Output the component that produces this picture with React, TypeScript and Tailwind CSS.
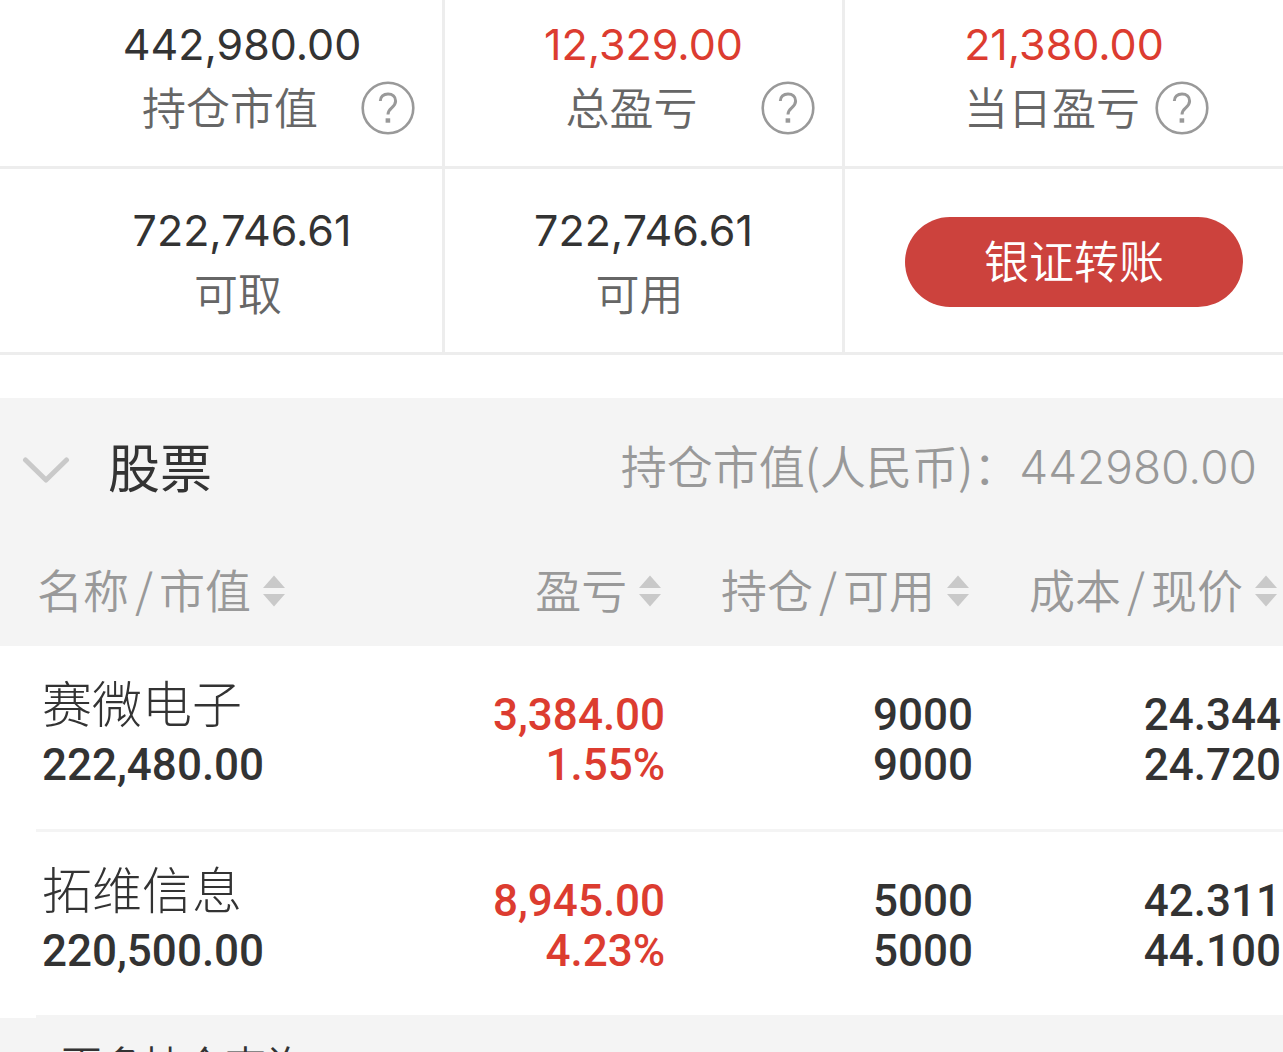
import type { ReactNode } from "react";

type Stat = {
  value: string;
  label: string;
  rise?: boolean;
  helpClass?: string;
};

const stats: Stat[] = [
  { value: "442,980.00", label: "持仓市值", helpClass: "pr-[27px]" },
  { value: "12,329.00", label: "总盈亏", rise: true, helpClass: "pr-[27px]" },
  { value: "21,380.00", label: "当日盈亏", rise: true, helpClass: "pr-[74px]" },
];

const funds: Stat[] = [
  { value: "722,746.61", label: "可取" },
  { value: "722,746.61", label: "可用" },
];

const holdings = [
  {
    name: "赛微电子",
    marketValue: "222,480.00",
    profit: "3,384.00",
    ratio: "1.55%",
    shares: "9000",
    available: "9000",
    cost: "24.344",
    price: "24.720",
  },
  {
    name: "拓维信息",
    marketValue: "220,500.00",
    profit: "8,945.00",
    ratio: "4.23%",
    shares: "5000",
    available: "5000",
    cost: "42.311",
    price: "44.100",
  },
];

const columns = [
  { parts: ["名称", "市值"], className: "w-[28%] pl-[37px]", align: "justify-start" },
  { parts: ["盈亏"], className: "w-[24%] pr-[6px]", align: "justify-end" },
  { parts: ["持仓", "可用"], className: "w-[24%] pr-[6px]", align: "justify-end" },
  { parts: ["成本", "现价"], className: "w-[24%] pr-[6px]", align: "justify-end" },
];

function HelpIcon() {
  return (
    <svg viewBox="0 0 54 54" className="block size-[54px]" fill="none" stroke="#999" aria-hidden="true">
      <circle cx="27" cy="27" r="25.3" strokeWidth="2.6" />
      <path
        d="M19.3 20c0-4.2 3.2-7 7.7-7s7.6 2.9 7.6 7c0 3.2-1.6 4.9-3.9 6.9C28.2 29 27 30.3 27 33.5"
        strokeWidth="3"
      />
      <rect x="24.6" y="37.3" width="4.6" height="4.4" fill="#999" stroke="none" />
    </svg>
  );
}

function SortIcon() {
  return (
    <svg viewBox="0 0 22 32" className="h-8 w-[22px] shrink-0" fill="#c9c9c9" aria-hidden="true">
      <path d="M11 0.5 22 13H0zM0 19h22L11 31.5z" />
    </svg>
  );
}

function StatCell({ value, label, rise, helpClass }: Stat) {
  return (
    <div>
      <div
        className={`text-center font-['Inter',sans-serif] text-[43px] leading-[58px] font-normal ${
          rise ? "text-[#dc3c30]" : "text-[#333]"
        }`}
      >
        {value}
      </div>
      <div className="mt-0.5 grid h-[66px] grid-cols-[minmax(0,1fr)_auto_minmax(0,1fr)] items-center">
        <span />
        <span className={`self-start text-[44px] leading-[62px] text-[#666] ${helpClass ? "pr-6" : "pr-2"}`}>
          {label}
        </span>
        {helpClass && (
          <div className={`flex justify-end ${helpClass}`}>
            <button type="button" aria-label={`${label}说明`} className="shrink-0">
              <HelpIcon />
            </button>
          </div>
        )}
      </div>
    </div>
  );
}

function NumberCell({ children, rise }: { children: ReactNode; rise?: boolean }) {
  return (
    <td
      className={`border-b-[3px] border-[#f4f4f4] pt-11 pr-0.5 text-right align-top font-['Roboto',sans-serif] text-[44px] leading-[50px] font-medium ${
        rise ? "text-[#dc3c30]" : "text-[#333]"
      }`}
    >
      {children}
    </td>
  );
}

export default function App() {
  return (
    <main className="h-screen overflow-hidden bg-white font-['Noto_Sans_CJK_SC',sans-serif] font-[350] text-[#333]">
      <section className="grid grid-cols-[445fr_400fr_438fr]">
        {stats.map((item, i) => (
          <div
            key={item.label}
            className={`h-[169px] border-b-[3px] border-[#ededed] pt-[15px] ${i < 2 ? "border-r-[3px]" : ""} ${
              i === 0 ? "pl-[42px]" : ""
            }`}
          >
            <StatCell {...item} />
          </div>
        ))}
        {funds.map((item, i) => (
          <div
            key={item.label}
            className={`h-[186px] border-r-[3px] border-b-[3px] border-[#ededed] pt-8 ${i === 0 ? "pl-[42px]" : ""}`}
          >
            <StatCell {...item} />
          </div>
        ))}
        <div className="border-b-[3px] border-[#ededed] pt-12 pr-10 pl-[60px]">
          <button type="button" className="h-[90px] w-full rounded-full bg-[#cc423d] pb-1 text-[45px] text-white">
            银证转账
          </button>
        </div>
      </section>

      <section className="mt-[43px]">
        <header className="flex h-[140px] items-center justify-between bg-[#f4f4f4] pr-[26px] pb-1 pl-[22px]">
          <h2>
            <button type="button" className="flex items-center gap-[38px] text-[52px] font-normal">
              <svg
                viewBox="0 0 48 28"
                className="mt-2 h-7 w-12"
                fill="none"
                stroke="#c9c9c9"
                strokeWidth="5"
                strokeLinecap="round"
                strokeLinejoin="round"
                aria-hidden="true"
              >
                <path d="M3.5 4 24 24 44.5 4" />
              </svg>
              股票
            </button>
          </h2>
          <p className="text-[46px] text-[#999]">
            持仓市值(人民币)：<span className="font-['Inter',sans-serif] font-light">442980.00</span>
          </p>
        </header>

        <table className="w-full table-fixed border-separate border-spacing-0">
          <thead className="bg-[#f4f4f4]">
            <tr>
              {columns.map((col) => (
                <th key={col.parts[0]} scope="col" className={`h-[108px] font-[350] ${col.className}`}>
                  <button
                    type="button"
                    className={`flex w-full items-center gap-3 pb-0.5 text-[46px] whitespace-nowrap text-[#999] ${col.align}`}
                  >
                    <span className="pb-1.5">
                      {col.parts[0]}
                      {col.parts[1] && (
                        <>
                          <span className="mx-[6px]">/</span>
                          {col.parts[1]}
                        </>
                      )}
                    </span>
                    <SortIcon />
                  </button>
                </th>
              ))}
            </tr>
          </thead>
          <tbody>
            {holdings.map((row) => (
              <tr key={row.name}>
                <td className="pl-9 align-top">
                  <div className="h-[186px] border-b-[3px] border-[#f4f4f4] pt-5 pl-[6px]">
                    <div className="mb-1 text-[50px] leading-[70px] font-light">{row.name}</div>
                    <div className="font-['Roboto',sans-serif] text-[44px] leading-[50px] font-medium">
                      {row.marketValue}
                    </div>
                  </div>
                </td>
                <NumberCell rise>
                  <div>{row.profit}</div>
                  <div>{row.ratio}</div>
                </NumberCell>
                <NumberCell>
                  <div>{row.shares}</div>
                  <div>{row.available}</div>
                </NumberCell>
                <NumberCell>
                  <div>{row.cost}</div>
                  <div>{row.price}</div>
                </NumberCell>
              </tr>
            ))}
          </tbody>
        </table>
      </section>

      <footer className="bg-[#f4f4f4] pl-[61px]">
        <a href="#more" className="block text-[41px] leading-[90px]">
          更多持仓查询
        </a>
      </footer>
    </main>
  );
}
